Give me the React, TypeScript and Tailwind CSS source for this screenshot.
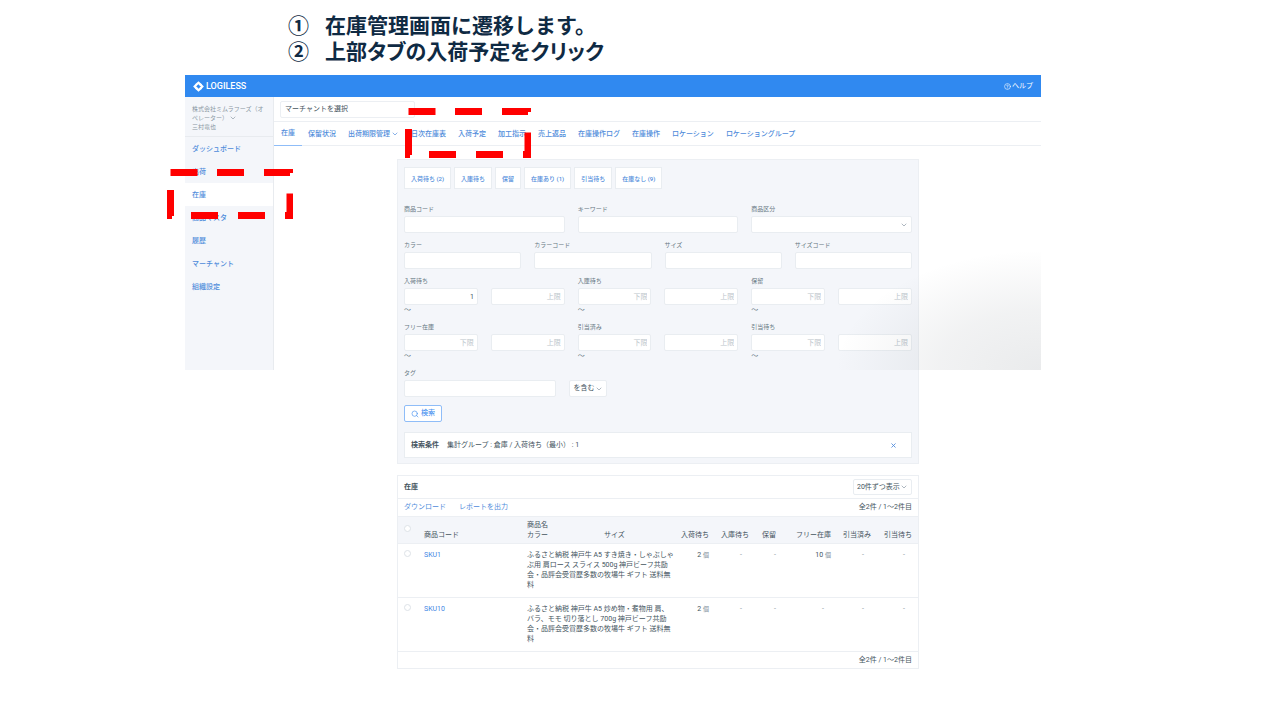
import { useId } from "react";
import type { ReactNode } from "react";
import { ChevronDown, CircleHelp, Search, X } from "lucide-react";

const navItems = ["ダッシュボード", "出荷", "在庫", "商品マスタ", "履歴", "マーチャント", "組織設定"];

const tabs = [
  "在庫",
  "保留状況",
  "出荷期限管理",
  "日次在庫表",
  "入荷予定",
  "加工指示",
  "売上返品",
  "在庫操作ログ",
  "在庫操作",
  "ロケーション",
  "ロケーショングループ",
];

const quickFilters = ["入荷待ち (2)", "入庫待ち", "保留", "在庫あり (1)", "引当待ち", "在庫なし (9)"];

const rows = [
  {
    code: "SKU1",
    name: [
      "ふるさと納税 神戸牛 A5 すき焼き・しゃぶしゃ",
      "ぶ用 肩ロース スライス 500g 神戸ビーフ共励",
      "会・品評会受賞歴多数の牧場牛 ギフト 送料無",
      "料",
    ],
    counts: ["2", "", "", "10", "", ""],
  },
  {
    code: "SKU10",
    name: [
      "ふるさと納税 神戸牛 A5 炒め物・煮物用 肩、",
      "バラ、モモ 切り落とし 700g 神戸ビーフ共励",
      "会・品評会受賞歴多数の牧場牛 ギフト 送料無",
      "料",
    ],
    counts: ["2", "", "", "", "", ""],
  },
];

const inputClass =
  "block h-[17px] w-full min-w-0 rounded-xs border border-[#e9edf1] bg-white px-[3px] text-[7px] text-[#44545e] placeholder:text-[#bcc5cb]";

function FieldLabel({ htmlFor, children }: { htmlFor: string; children: ReactNode }) {
  return (
    <label htmlFor={htmlFor} className="block h-[14px] text-[6px] leading-[14px] whitespace-nowrap text-[#667782]">
      {children}
    </label>
  );
}

function TextField({ label }: { label: string }) {
  const id = useId();
  return (
    <div className="min-w-0">
      <FieldLabel htmlFor={id}>{label}</FieldLabel>
      <input id={id} type="text" className={inputClass} />
    </div>
  );
}

function RangeField({ label, min }: { label: string; min?: string }) {
  const id = useId();
  return (
    <div className="min-w-0">
      <FieldLabel htmlFor={id}>{label}</FieldLabel>
      <div className="grid grid-cols-2 gap-[13px]">
        <input id={id} type="text" defaultValue={min} placeholder="下限" className={inputClass + " text-right"} />
        <input type="text" aria-label={label + " 上限"} placeholder="上限" className={inputClass + " text-right"} />
      </div>
      <div className="h-[10px] text-[7px] leading-[10px] text-[#667782]">〜</div>
    </div>
  );
}

function SelectBox({ id, label, option, className }: { id?: string; label?: string; option: string; className: string }) {
  return (
    <div className={"relative " + className}>
      <select
        id={id}
        aria-label={label}
        className="block h-full w-full appearance-none rounded-xs border border-[#e9edf1] bg-white pr-2 pl-[3px] text-[7px] text-[#44545e]"
      >
        <option>{option}</option>
      </select>
      <ChevronDown className="pointer-events-none absolute top-1/2 right-1 size-2 -translate-y-1/2 text-[#8593a0]" />
    </div>
  );
}

function CategoryField() {
  const id = useId();
  return (
    <div className="min-w-0">
      <FieldLabel htmlFor={id}>商品区分</FieldLabel>
      <SelectBox id={id} option="" className="h-[17px]" />
    </div>
  );
}

function DashedFrame({ className }: { className: string }) {
  return (
    <svg
      aria-hidden="true"
      viewBox="0 0 126 50"
      className={"pointer-events-none absolute h-[50px] w-[126px] " + className}
      fill="#ff0000"
    >
      <path d="M3.5 0h27v7h-27z M50 0h27v7h-27z M97 0h29v4h-3v3h-26z" />
      <path d="M0 21h7v26h-2v3h-5z" />
      <path d="M24 43h27v7h-27z M71 43h27v7h-27z" />
      <path d="M119.500 24.500h6.500v25.500h-8v-7h1.500z" />
    </svg>
  );
}

function Sidebar() {
  return (
    <aside className="w-[89px] shrink-0 self-start border-r border-[#e8ebef] bg-[#f4f6fa] pb-[72px]">
      <div className="h-10 border-b border-[#e8ebef] px-[7px] pt-[7px] text-[6px] leading-[9px] text-[#8a97a3]">
        <button type="button" className="block text-left whitespace-nowrap">
          株式会社ミムラフーズ（オ
          <br />
          ペレーター）
          <ChevronDown className="ml-px inline size-2" />
        </button>
        <p>三村竜也</p>
      </div>
      <nav>
        {navItems.map((item) => (
          <a
            key={item}
            href="#"
            className={
              "block h-[23px] px-[7px] pt-px text-[7px] leading-[23px] font-medium text-[#4f8cdb] " +
              (item === "在庫" ? "bg-white" : "")
            }
          >
            {item}
          </a>
        ))}
      </nav>
    </aside>
  );
}

function SearchPanel() {
  const tagId = useId();
  return (
    <section className="border border-[#eceff3] bg-[#f4f6fa] px-[6px] pt-[7px] pb-[5px]">
      <div className="flex gap-[3px]">
        {quickFilters.map((f) => (
          <button
            key={f}
            type="button"
            className="h-[22px] border border-[#e9edf1] bg-white px-[6px] text-[6px] font-medium whitespace-nowrap text-[#4f8cdb]"
          >
            {f}
          </button>
        ))}
      </div>
      <div className="mt-[13px] flex flex-col gap-[5px]">
        <div className="grid grid-cols-3 gap-[13px]">
          <TextField label="商品コード" />
          <TextField label="キーワード" />
          <CategoryField />
        </div>
        <div className="grid grid-cols-4 gap-[13px]">
          <TextField label="カラー" />
          <TextField label="カラーコード" />
          <TextField label="サイズ" />
          <TextField label="サイズコード" />
        </div>
        <div className="grid grid-cols-3 gap-[13px]">
          <RangeField label="入荷待ち" min="1" />
          <RangeField label="入庫待ち" />
          <RangeField label="保留" />
        </div>
        <div className="grid grid-cols-3 gap-[13px]">
          <RangeField label="フリー在庫" />
          <RangeField label="引当済み" />
          <RangeField label="引当待ち" />
        </div>
        <div className="flex items-end gap-[13px]">
          <div className="w-[30%]">
            <FieldLabel htmlFor={tagId}>タグ</FieldLabel>
            <input id={tagId} type="text" className={inputClass} />
          </div>
          <SelectBox label="タグの条件" option="を含む" className="h-[17px] w-[38px]" />
        </div>
      </div>
      <button
        type="button"
        className="mt-2 flex h-[17px] w-[38px] items-center justify-center gap-[2px] rounded-xs border border-[#8fbdf8] bg-white text-[7px] font-medium text-[#4a93f0]"
      >
        <Search className="size-2" strokeWidth={2} />
        検索
      </button>
      <div className="mt-[10px] flex h-[26px] items-center gap-2 border border-[#e9edf1] bg-white px-[6px] text-[7px] whitespace-nowrap text-[#44545e]">
        <strong className="font-bold">検索条件</strong>
        <span>集計グループ : 倉庫 / 入荷待ち（最小） : 1</span>
        <button type="button" aria-label="条件をクリア" className="mr-2 ml-auto text-[#4f8cdb]">
          <X className="size-[7px]" strokeWidth={3} />
        </button>
      </div>
    </section>
  );
}

function CountCell({ value }: { value: string }) {
  return (
    <td className="text-right">
      {value ? (
        <>
          {value} <span className="text-[6px] text-[#7b8993]">個</span>
        </>
      ) : (
        <span className="pr-[7px] text-[#8a97a3]">-</span>
      )}
    </td>
  );
}

function Checkbox({ label }: { label: string }) {
  return (
    <input
      type="checkbox"
      aria-label={label}
      className="block size-[7px] appearance-none rounded-sm border border-[#dde2e7] bg-white"
    />
  );
}

function StockPanel() {
  return (
    <section className="mt-[11px] border border-[#eceff3] bg-white text-[7px] text-[#44545e]">
      <div className="flex h-[23px] items-center justify-between border-b border-[#eceff3] px-[6px]">
        <h2 className="font-bold">在庫</h2>
        <SelectBox label="表示件数" option="20件ずつ表示" className="h-4 w-[59px]" />
      </div>
      <div className="flex h-[17px] items-center gap-[13px] px-[6px]">
        <a href="#" className="text-[#4f8cdb]">ダウンロード</a>
        <a href="#" className="text-[#4f8cdb]">レポートを出力</a>
        <span className="ml-auto">全2件 / 1〜2件目</span>
      </div>
      <table className="w-full table-fixed border-collapse leading-[10px]">
        <colgroup>
          <col className="w-[26px]" />
          <col className="w-[103px]" />
          <col className="w-[77px]" />
          <col />
          <col className="w-10" />
          <col className="w-10" />
          <col className="w-[34px]" />
          <col className="w-12" />
          <col className="w-10" />
          <col className="w-[47px]" />
        </colgroup>
        <thead>
          <tr className="h-[27px] border-y border-[#eceff3] bg-[#f4f6fa] text-left align-bottom whitespace-nowrap *:pb-[3px] *:font-normal">
            <th className="pl-[6px] align-middle">
              <Checkbox label="すべて選択" />
            </th>
            <th>商品コード</th>
            <th>
              商品名
              <br />
              カラー
            </th>
            <th>サイズ</th>
            <th className="text-right">入荷待ち</th>
            <th className="text-right">入庫待ち</th>
            <th className="pr-[7px] text-right">保留</th>
            <th className="text-right">フリー在庫</th>
            <th className="text-right">引当済み</th>
            <th className="pr-[6px] text-right">引当待ち</th>
          </tr>
        </thead>
        <tbody>
          {rows.map((row) => (
            <tr key={row.code} className="h-[54px] border-b border-[#eceff3] align-top *:pt-[6px] [&>td:last-child]:pr-[6px]">
              <td className="pl-[6px]">
                <Checkbox label={row.code + " を選択"} />
              </td>
              <td>
                <a href="#" className="text-[#3f86e4]">{row.code}</a>
              </td>
              <td colSpan={2} className="whitespace-nowrap">
                {row.name.map((line) => (
                  <span key={line} className="block">
                    {line}
                  </span>
                ))}
              </td>
              {row.counts.map((value, i) => (
                <CountCell key={i} value={value} />
              ))}
            </tr>
          ))}
        </tbody>
      </table>
      <div className="flex h-4 items-center justify-end px-[6px]">全2件 / 1〜2件目</div>
    </section>
  );
}

export default function App() {
  return (
    <main className="min-h-screen bg-white pt-[13px] pr-[239px] pb-12 pl-[185px] font-[Roboto,'Noto_Sans_CJK_JP',sans-serif]">
      <ol className="mb-[10px] ml-[103px] text-[21px] leading-[26px] font-bold whitespace-nowrap text-[#0f2a43]">
        <li className="flex">
          <span className="w-[37px]">①</span>在庫管理画面に遷移します。
        </li>
        <li className="flex">
          <span className="w-[37px]">②</span>
          <span className="[font-feature-settings:'palt']">上部タブの入荷予定をクリック</span>
        </li>
      </ol>

      <div className="relative">
        <header className="flex h-[22px] items-center justify-between bg-[#3089f0] px-2 pt-px text-white">
          <a href="#" className="flex items-center gap-[2px] text-[9px] font-medium">
            <svg viewBox="0 0 20 20" className="size-[11px]" fill="none" stroke="currentColor" strokeWidth="4" aria-hidden="true">
              <path d="M5 7.500 10 3l5 5" />
              <path d="M12.500 5.500 17 10l-3.500 3.500" />
              <path d="M15 12.500 10 17l-5-5" />
              <path d="M7.500 14.500 3 10l3-3" />
            </svg>
            LOGILESS
          </a>
          <a href="#" className="flex items-center gap-px text-[7px]">
            <CircleHelp className="size-[7px]" />
            ヘルプ
          </a>
        </header>

        <div className="flex">
          <Sidebar />
          <div className="min-w-0 flex-1">
            <div className="flex h-[25px] items-center border-b border-[#eceff3] px-[6px]">
              <input
                type="text"
                aria-label="マーチャント"
                placeholder="マーチャントを選択"
                className="h-[17px] w-[135px] rounded-xs border border-[#eceff3] px-1 text-[7px] placeholder:text-[#44545e]"
              />
            </div>
            <nav className="flex h-6 gap-3 border-b border-[#eceff3] pl-[7px] text-[7px] leading-[23px] font-medium whitespace-nowrap text-[#4f8cdb]">
              {tabs.map((tab) => (
                <a
                  key={tab}
                  href="#"
                  className={
                    "flex h-6 items-center " + (tab === "在庫" ? "-ml-[7px] -mr-[6px] border-b border-[#8fbdf8] px-[7px]" : "")
                  }
                >
                  {tab}
                  {tab === "出荷期限管理" && <ChevronDown className="ml-px size-2" />}
                </a>
              ))}
            </nav>
            <div className="pt-[13px] pr-[122px] pl-[123px]">
              <SearchPanel />
              <StockPanel />
            </div>
          </div>
        </div>

        <div className="pointer-events-none absolute top-[175px] right-0 h-[120px] w-[205px] bg-[radial-gradient(ellipse_100%_100%_at_100%_100%,rgba(80,90,100,0.12)_0%,rgba(80,90,100,0.08)_50%,rgba(80,90,100,0)_100%)]" />
        <DashedFrame className="top-[33px] left-[220px]" />
        <DashedFrame className="top-[94px] left-[-18px]" />
      </div>
    </main>
  );
}
